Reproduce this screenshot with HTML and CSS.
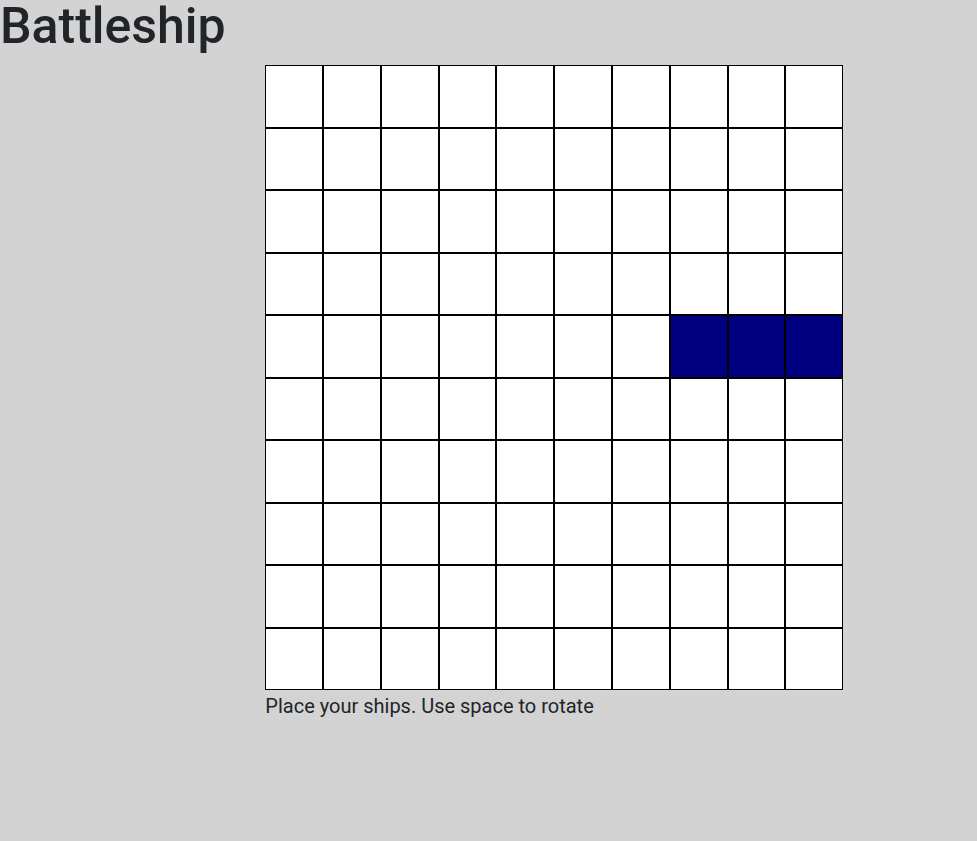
FILE: index.html
```html
<!DOCTYPE html>
<html>
<head>
<meta charset="utf-8">
<link rel="stylesheet" href="styles.css">
</head>
<body>
<h1 class="title">Battleship</h1>
<div class="board-wrap">
  <div class="board" id="board"></div>
  <p class="status">Place your ships. Use space to rotate</p>
</div>
<script>
  var b = document.getElementById('board');
  for (var r = 0; r < 10; r++) {
    for (var c = 0; c < 10; c++) {
      var d = document.createElement('div');
      d.className = 'cell' + (r === 4 && c >= 7 ? ' ship' : '');
      b.appendChild(d);
    }
  }
</script>
</body>
</html>
```
FILE: styles.css
```css
html, body {
  margin: 0;
  padding: 0;
}
body {
  background: #d3d3d3;
  font-family: Roboto, "Noto Sans", sans-serif;
  color: #212529;
  font-size: 20px;
  line-height: 1.5;
  height: 841px;
}
.title {
  margin: 0;
  height: 65px;
  font-size: 50px;
  font-weight: 500;
  line-height: 52px;
}
.board-wrap {
  margin-left: 265.3px;
  width: 578px;
}
.board {
  display: grid;
  grid-template-columns: repeat(10, 1fr);
  grid-template-rows: repeat(10, 62.5px);
  width: 578px;
}
.cell {
  background: #fff;
  border: 1px solid #000;
}
.cell.ship {
  background: #000080;
}
.status {
  margin: 1px 0 0 0;
}
```
